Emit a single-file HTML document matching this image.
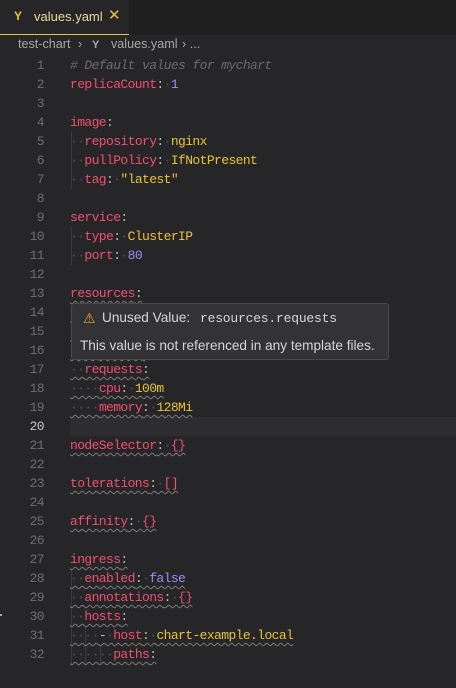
<!DOCTYPE html>
<html><head><meta charset="utf-8"><style>
body{margin:0;width:456px;height:688px;background:#262628;overflow:hidden;font-family:"Liberation Sans",sans-serif;position:relative}
.tabbar{position:absolute;left:0;top:0;width:456px;height:35px;background:#1f1f20}
.tab{position:absolute;left:0;top:0;width:129px;height:35px;background:#262628;border-bottom:1px solid #e8c33a;box-sizing:border-box}
.y{color:#e8c33a;font-weight:bold;font-family:"Liberation Sans",sans-serif}
.crumb{position:absolute;top:37px;font-size:12.6px;color:#a8a8a8;white-space:pre}
.ln{position:absolute;left:0;width:44px;text-align:right;font-family:"Liberation Mono",monospace;font-size:13px;letter-spacing:-0.6px;color:#6e6e6e;line-height:19px}
.cl{position:absolute;left:70px;font-family:"Liberation Mono",monospace;font-size:13px;letter-spacing:-0.6px;line-height:19px;white-space:pre;color:#cfcfcf}
.k{color:#f0506e}.p{color:#bdbdbd}.s{color:#e8c33a}.n{color:#9d8df1}.c{color:#6b6b6b;font-style:italic}.d{color:#505050}.b{color:#f0506e}
.w{text-decoration:underline wavy #7a7a7a;text-decoration-thickness:1px;text-underline-offset:3px}
.hl{position:absolute;left:70px;top:417px;width:386px;height:19px;background:#2d2d30}
.g{position:absolute;width:1px;background:#3c3c3e}
.tip{position:absolute;left:71px;top:303px;width:318px;height:57px;background:#333336;border:1px solid #4a4a4d;border-radius:3px;box-sizing:border-box;font-size:13.6px;color:#d6d6d6}
</style></head><body>
<div class="tabbar"><div class="tab">
<span class="y" style="position:absolute;left:14px;top:9px;font-size:12px">Y</span>
<span style="position:absolute;left:34px;top:9px;font-size:13px;color:#e8d9a0">values.yaml</span>
<span style="position:absolute;left:108px;top:6px;font-size:15px;color:#e8c33a">✕</span>
</div></div>
<div class="crumb" style="left:18px">test-chart</div>
<div class="crumb" style="left:78px">›</div>
<div class="crumb y" style="left:92px;font-size:11px;top:39px">Y</div>
<div class="crumb" style="left:111px">values.yaml</div>
<div class="crumb" style="left:182px">› ...</div>
<div class="hl"></div>
<div class="g" style="left:71px;top:132px;height:57px"></div>
<div class="g" style="left:71px;top:227px;height:38px"></div>
<div class="g" style="left:71px;top:569px;height:95px"></div>
<div class="g" style="left:85px;top:626px;height:38px"></div>
<div class="g" style="left:100px;top:645px;height:19px"></div>
<div id="code"></div>
<div style="position:absolute;left:0;top:614px;width:2px;height:2px;background:#aaa"></div>
<script>
var L=[
'<span class="c"># Default values for mychart</span>',
'<span class="k">replicaCount</span><span class="p">:</span><span class="d">·</span><span class="n">1</span>',
'',
'<span class="k">image</span><span class="p">:</span>',
'<span class="d">··</span><span class="k">repository</span><span class="p">:</span><span class="d">·</span><span class="s">nginx</span>',
'<span class="d">··</span><span class="k">pullPolicy</span><span class="p">:</span><span class="d">·</span><span class="s">IfNotPresent</span>',
'<span class="d">··</span><span class="k">tag</span><span class="p">:</span><span class="d">·</span><span class="s">"latest"</span>',
'',
'<span class="k">service</span><span class="p">:</span>',
'<span class="d">··</span><span class="k">type</span><span class="p">:</span><span class="d">·</span><span class="s">ClusterIP</span>',
'<span class="d">··</span><span class="k">port</span><span class="p">:</span><span class="d">·</span><span class="n">80</span>',
'',
'<span class="w"><span class="k">resources</span><span class="p">:</span></span>',
'<span class="w"><span class="d">··</span><span class="k">limits</span><span class="p">:</span></span>',
'<span class="w"><span class="d">····</span><span class="k">cpu</span></span>',
'<span class="w"><span class="d">····</span><span class="k">memory</span><span class="p">:</span></span>',
'<span class="w"><span class="d">··</span><span class="k">requests</span><span class="p">:</span></span>',
'<span class="w"><span class="d">····</span><span class="k">cpu</span><span class="p">:</span><span class="d">·</span><span class="s">100m</span></span>',
'<span class="w"><span class="d">····</span><span class="k">memory</span><span class="p">:</span><span class="d">·</span><span class="s">128Mi</span></span>',
'',
'<span class="w"><span class="k">nodeSelector</span><span class="p">:</span><span class="d">·</span><span class="b">{}</span></span>',
'',
'<span class="w"><span class="k">tolerations</span><span class="p">:</span><span class="d">·</span><span class="b">[]</span></span>',
'',
'<span class="w"><span class="k">affinity</span><span class="p">:</span><span class="d">·</span><span class="b">{}</span></span>',
'',
'<span class="w"><span class="k">ingress</span><span class="p">:</span></span>',
'<span class="w"><span class="d">··</span><span class="k">enabled</span><span class="p">:</span><span class="d">·</span><span class="n">false</span></span>',
'<span class="w"><span class="d">··</span><span class="k">annotations</span><span class="p">:</span><span class="d">·</span><span class="b">{}</span></span>',
'<span class="w"><span class="d">··</span><span class="k">hosts</span><span class="p">:</span></span>',
'<span class="w"><span class="d">····</span><span class="p">-</span><span class="d">·</span><span class="k">host</span><span class="p">:</span><span class="d">·</span><span class="s">chart-example.local</span></span>',
'<span class="w"><span class="d">······</span><span class="k">paths</span><span class="p">:</span></span>'
];
var h='';
for(var i=0;i<L.length;i++){var t=56+i*19;
h+='<div class="ln" style="top:'+t+'px;'+(i==19?'color:#c6c6c6':'')+'">'+(i+1)+'</div><div class="cl" style="top:'+t+'px">'+L[i]+'</div>';}
document.getElementById('code').innerHTML=h;
</script>
<div class="tip">
<span style="position:absolute;left:11px;top:6px;color:#e8a33a;font-size:14px">⚠</span>
<span style="position:absolute;left:30px;top:6px">Unused Value:</span>
<span style="position:absolute;left:128px;top:7px;font-family:'Liberation Mono',monospace;font-size:13px;letter-spacing:-0.2px">resources.requests</span>
<span style="position:absolute;left:8px;top:34px">This value is not referenced in any template files.</span>
</div>
</body></html>
